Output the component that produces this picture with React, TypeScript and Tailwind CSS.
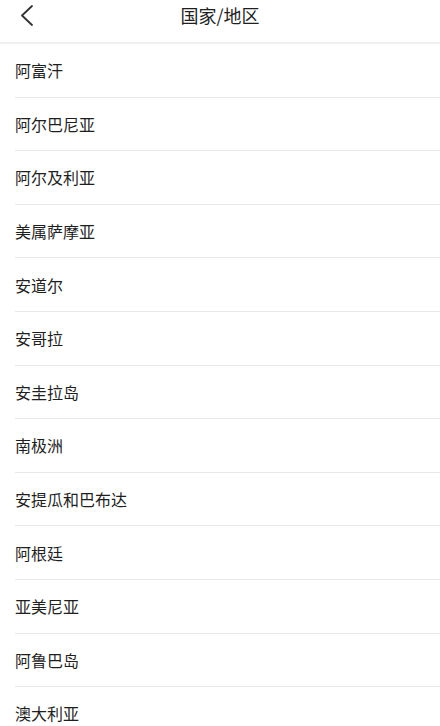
import React from "react";

const items = [
  "阿富汗",
  "阿尔巴尼亚",
  "阿尔及利亚",
  "美属萨摩亚",
  "安道尔",
  "安哥拉",
  "安圭拉岛",
  "南极洲",
  "安提瓜和巴布达",
  "阿根廷",
  "亚美尼亚",
  "阿鲁巴岛",
  "澳大利亚",
];

export default function App() {
  return (
    <div
      className="w-[440px] h-[726px] overflow-hidden bg-white text-[#1f1f1f]"
      style={{ fontFamily: '"Noto Sans CJK SC", "Noto Sans", sans-serif' }}
    >
      <div className="relative h-[44px] border-b-2 border-[#f0f0f0]">
        <div className="absolute left-[18px] top-[4px]">
          <svg width="18" height="22" viewBox="0 0 18 22" fill="none">
            <path d="M14 2 L4 11.5 L14 21" stroke="#333" strokeWidth="1.8" strokeLinecap="round" strokeLinejoin="round" />
          </svg>
        </div>
        <div className="flex justify-center pt-[1px] text-[18px] leading-[28px]">国家/地区</div>
      </div>
      <div className="pl-[15px]">
        {items.map((t) => (
          <div
            key={t}
            className="h-[53.6px] flex items-center border-b border-[#e8e8e8] text-[16px]"
          >
            {t}
          </div>
        ))}
      </div>
    </div>
  );
}
